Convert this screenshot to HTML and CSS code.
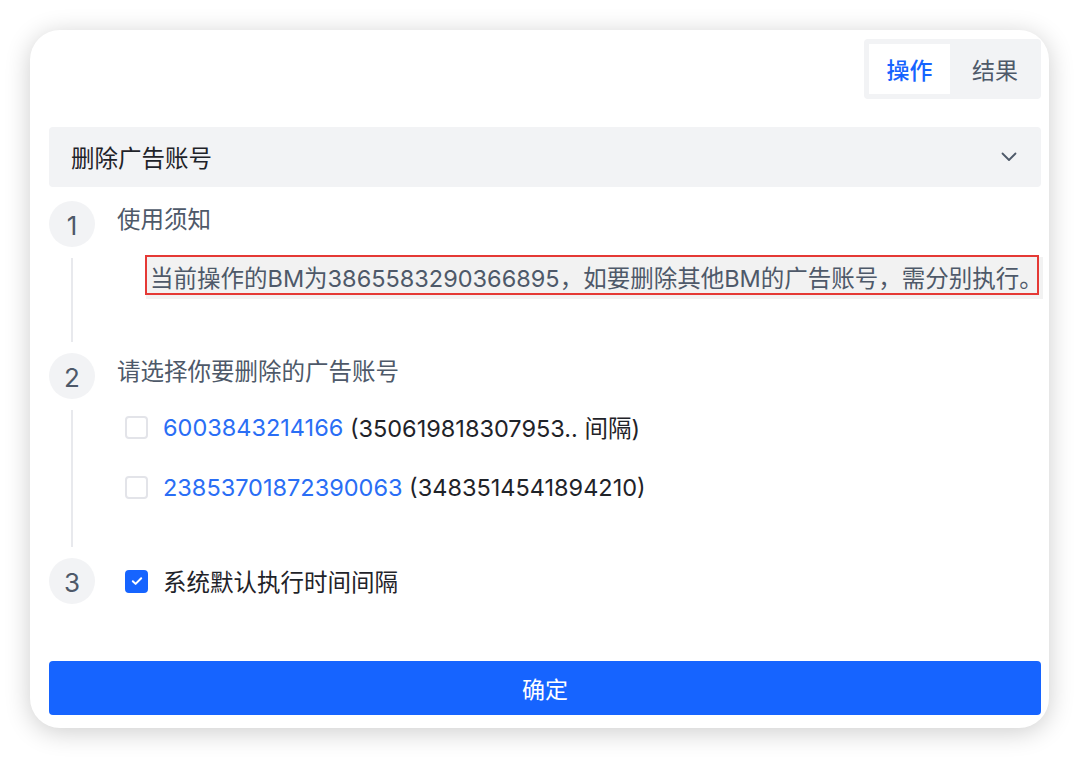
FILE: index.html
```html
<!DOCTYPE html>
<html lang="zh-CN">
<head>
<meta charset="utf-8">
<title>删除广告账号</title>
<link rel="stylesheet" href="styles.css">
</head>
<body>
<div class="card">
  <div class="tabs-row">
    <div class="tabs">
      <div class="tab active">操作</div>
      <div class="tab">结果</div>
    </div>
  </div>

  <div class="select">
    <span class="select-text">删除广告账号</span>
    <svg class="chevron" width="16" height="10" viewBox="0 0 16 10"><path d="M1.5 1.5 L8 8 L14.5 1.5" fill="none" stroke="#4e5969" stroke-width="1.8" stroke-linecap="round" stroke-linejoin="round"/></svg>
  </div>

  <div class="step step-1">
    <div class="rail">
      <div class="num">1</div>
      <div class="line"></div>
    </div>
    <div class="body">
      <div class="title">使用须知</div>
      <div class="notice"><span class="notice-text">当前操作的BM为3865583290366895，如要删除其他BM的广告账号，需分别执行。</span></div>
    </div>
  </div>

  <div class="step step-2">
    <div class="rail">
      <div class="num">2</div>
      <div class="line"></div>
    </div>
    <div class="body">
      <div class="title">请选择你要删除的广告账号</div>
      <div class="options">
        <label class="option"><span class="box"></span><span class="link">6003843214166</span>&nbsp;<span class="extra">(350619818307953.. 间隔)</span></label>
        <label class="option"><span class="box"></span><span class="link">23853701872390063</span>&nbsp;<span class="extra">(3483514541894210)</span></label>
      </div>
    </div>
  </div>

  <div class="step step-3">
    <div class="rail">
      <div class="num">3</div>
    </div>
    <div class="body body-3">
      <label class="option option-3"><span class="box checked"><svg width="12" height="10" viewBox="0 0 12 10"><path d="M1.8 5.2 L4.6 7.9 L10.2 2.2" fill="none" stroke="#fff" stroke-width="2" stroke-linecap="round" stroke-linejoin="round"/></svg></span><span class="label">系统默认执行时间间隔</span></label>
    </div>
  </div>

  <button class="submit">确定</button>
</div>
</body>
</html>
```

FILE: styles.css
```css
* { box-sizing: border-box; }
html, body { margin: 0; padding: 0; background: #ffffff; }
body {
  padding: 30px 31px 31px 30px;
  font-family: "Inter", "Noto Sans CJK SC", sans-serif;
  font-size: 23.5px;
  color: #1f2329;
}
.card {
  width: 1019px;
  height: 698px;
  background: #fff;
  border-radius: 30px;
  box-shadow: 0 4px 26px rgba(0, 0, 0, 0.2);
  padding: 9px 8px 13px 19px;
  display: flex;
  flex-direction: column;
}
.tabs-row { display: flex; justify-content: flex-end; }
.tabs {
  display: flex;
  background: #f2f3f5;
  border-radius: 4px;
  padding: 5px;
  height: 60px;
  width: 177px;
}
.tab {
  width: 81px;
  height: 50px;
  display: flex;
  align-items: center;
  justify-content: center;
  color: #4e5969;
  font-size: 23px;
}
.tab + .tab { width: 86px; padding-left: 4px; }
.tab.active { background: #fff; color: #1664ff; font-weight: 500; }

.select {
  margin-top: 28px;
  height: 60px;
  background: #f2f3f5;
  border-radius: 4px;
  display: flex;
  align-items: center;
  justify-content: space-between;
  padding: 0 24px 0 22px;
  color: #1f2329;
}
.select-text { font-size: 23.5px; }
.chevron { display: block; }

.step { display: flex; }
.step-1 { margin-top: 14px; height: 152px; }
.step-2 { height: 205px; }
.step-3 { height: 46px; }
.rail {
  width: 46px;
  display: flex;
  flex-direction: column;
  align-items: center;
  flex-shrink: 0;
}
.num {
  width: 46px;
  height: 46px;
  border-radius: 50%;
  background: #f2f3f5;
  color: #4e5969;
  display: flex;
  align-items: center;
  justify-content: center;
  font-size: 26px;
  padding-top: 3px;
}
.line {
  flex: 1;
  width: 2px;
  background: #e8e9ed;
  margin: 11px 0;
}
.body { margin-left: 22px; flex: 1; display: flex; flex-direction: column; }
.title {
  height: 38px;
  line-height: 38px;
  color: #4e5969;
}
.notice {
  margin-top: 18px;
  margin-left: 29px;
  height: 42px;
  background: #f2f2f2;
  position: relative;
  display: flex;
  align-items: center;
  padding-left: 4px;
  color: #4e5969;
  white-space: nowrap;
}
.notice::before {
  content: "";
  position: absolute;
  left: -1px;
  top: -2px;
  right: 4px;
  bottom: 4px;
  border: 2px solid #e53935;
  pointer-events: none;
}
.notice-text { position: relative; top: -1px; }

.options { margin-top: 6px; margin-left: 8px; display: flex; flex-direction: column; }
.option {
  height: 60px;
  display: flex;
  align-items: center;
  white-space: nowrap;
}
.box {
  width: 23px;
  height: 23px;
  border: 2px solid #e3e4e9;
  border-radius: 4px;
  background: #fff;
  margin-right: 15px;
  display: flex;
  align-items: center;
  justify-content: center;
  flex-shrink: 0;
}
.box.checked { background: #1664ff; border-color: #1664ff; }
.box.checked svg { display: block; }
.link { color: #2a6ef5; }
.extra { color: #1f2329; }
.body-3 { justify-content: center; }
.option-3 { height: 46px; margin-left: 8px; }
.label { color: #1f2329; }

.submit {
  margin-top: 57px;
  height: 54px;
  width: 992px;
  border: none;
  border-radius: 4px;
  background: #1664ff;
  color: #fff;
  font-family: "Inter", "Noto Sans CJK SC", sans-serif;
  font-size: 23px;
  padding: 0;
}
```
